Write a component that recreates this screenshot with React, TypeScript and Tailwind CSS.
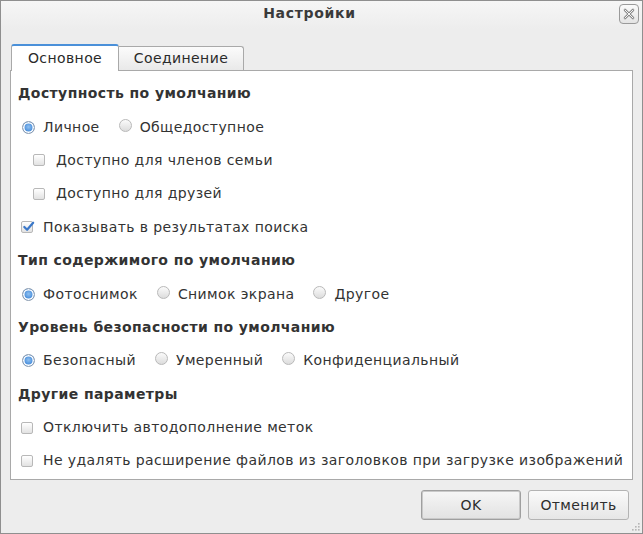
import React from "react";

const Radio = ({ checked }: { checked?: boolean }) => (
  <span
    className={
      "inline-block w-[13px] h-[13px] rounded-full border shrink-0 " +
      (checked
        ? "border-[#8a9bb0] bg-[radial-gradient(circle_at_50%_45%,#8fc0f0_0%,#4a8fdc_55%,#2f6fc0_100%)] shadow-[inset_0_0_0_1.5px_#ffffff]"
        : "border-[#b9b9b9] bg-[linear-gradient(#fbfbfb,#dcdcdc)]")
    }
  />
);

const Check = ({ checked }: { checked?: boolean }) => (
  <span className="relative inline-block w-[12px] h-[12px] rounded-[2px] border border-[#b8b8b8] bg-[linear-gradient(#ffffff,#e2e2e2)] shrink-0">
    {checked && (
      <svg
        viewBox="0 0 14 14"
        className="absolute left-[0px] top-[-2px] w-[13px] h-[13px]"
      >
        <path
          d="M2.5 7.5 L5.5 10.5 L12 3"
          fill="none"
          stroke="#3b78c9"
          strokeWidth="2.4"
          strokeLinecap="round"
          strokeLinejoin="round"
        />
      </svg>
    )}
  </span>
);

const Row = ({ children, className = "" }: { children: React.ReactNode; className?: string }) => (
  <div className={"h-[33.4px] flex items-center " + className}>{children}</div>
);

export default function App() {
  return (
    <div className="w-[643px] h-[534px] flex flex-col border border-[#8f8f8f] bg-[#ededed] text-[14px] tracking-[0.4px] text-[#333333] font-['DejaVu_Sans',sans-serif] overflow-hidden">
      {/* title bar */}
      <div className="relative h-[28px] flex items-center justify-center pb-[3px] pr-[24px] bg-[linear-gradient(#f6f6f6,#ededed)]">
        <span className="font-bold text-[14px] tracking-[0.7px] text-[#3a3a3a]">Настройки</span>
        <span className="absolute right-[3px] top-[3px] w-[20px] h-[20px] rounded-[4px] border border-[#9a9a9a] bg-[linear-gradient(#fafafa,#e4e4e4)] flex items-center justify-center">
          <svg viewBox="0 0 12 12" className="w-[12px] h-[12px]">
            <path
              d="M2 2 L10 10 M10 2 L2 10"
              stroke="#8a8a8a"
              strokeWidth="2.6"
              strokeLinecap="round"
            />
            <path
              d="M2 2 L10 10 M10 2 L2 10"
              stroke="#f4f4f4"
              strokeWidth="1"
              strokeLinecap="round"
            />
          </svg>
        </span>
      </div>

      {/* tabs */}
      <div className="mt-[15px] flex items-end pl-[10px] h-[26px]">
        <div className="relative z-10 h-[27px] w-[108px] -mb-px bg-white border border-[#a9a9a9] border-b-0 border-t-2 border-t-[#4a90d9] rounded-t-[3px] flex items-center justify-center text-[#2a2a2a]">
          Основное
        </div>
        <div className="h-[24px] w-[125px] bg-[linear-gradient(#fbfbfb,#e9e9e9)] border border-[#a9a9a9] border-l-0 border-b-0 rounded-tr-[3px] flex items-center justify-center text-[#2a2a2a]">
          Соединение
        </div>
      </div>

      {/* panel */}
      <div className="mx-[9px] h-[410px] bg-white border border-[#a9a9a9] pl-[7px] pt-[6px]">
        <Row>
          <span className="font-bold">Доступность по умолчанию</span>
        </Row>
        <Row className="pl-[4px]">
          <Radio checked />
          <span className="ml-[8px]">Личное</span>
          <span className="ml-[19px]">
            <Radio />
          </span>
          <span className="ml-[8px]">Общедоступное</span>
        </Row>
        <Row className="pl-[15px]">
          <Check />
          <span className="ml-[11px]">Доступно для членов семьи</span>
        </Row>
        <Row className="pl-[15px]">
          <Check />
          <span className="ml-[11px]">Доступно для друзей</span>
        </Row>
        <Row className="pl-[3px]">
          <Check checked />
          <span className="ml-[10px]">Показывать в результатах поиска</span>
        </Row>
        <Row>
          <span className="font-bold">Тип содержимого по умолчанию</span>
        </Row>
        <Row className="pl-[4px]">
          <Radio checked />
          <span className="ml-[8px]">Фотоснимок</span>
          <span className="ml-[19px]">
            <Radio />
          </span>
          <span className="ml-[8px]">Снимок экрана</span>
          <span className="ml-[19px]">
            <Radio />
          </span>
          <span className="ml-[8px]">Другое</span>
        </Row>
        <Row>
          <span className="font-bold">Уровень безопасности по умолчанию</span>
        </Row>
        <Row className="pl-[4px]">
          <Radio checked />
          <span className="ml-[8px]">Безопасный</span>
          <span className="ml-[19px]">
            <Radio />
          </span>
          <span className="ml-[8px]">Умеренный</span>
          <span className="ml-[19px]">
            <Radio />
          </span>
          <span className="ml-[8px]">Конфиденциальный</span>
        </Row>
        <Row>
          <span className="font-bold">Другие параметры</span>
        </Row>
        <Row className="pl-[3px]">
          <Check />
          <span className="ml-[10px]">Отключить автодополнение меток</span>
        </Row>
        <Row className="pl-[3px]">
          <Check />
          <span className="ml-[10px]">
            Не удалять расширение файлов из заголовков при загрузке изображений
          </span>
        </Row>
      </div>

      {/* buttons */}
      <div className="relative flex justify-end gap-[7px] pr-[13px] mt-[10px]">
        <button className="w-[100px] h-[30px] rounded-[3px] border border-[#9f9f9f] bg-[linear-gradient(#f6f6f6,#e2e2e2)] shadow-[inset_0_0_0_1px_#c9c9c9] text-[#2e2e2e]">
          OK
        </button>
        <button className="w-[101px] h-[30px] rounded-[3px] border border-[#b3b3b3] bg-[linear-gradient(#fafafa,#e6e6e6)] text-[#2e2e2e]">
          Отменить
        </button>
      </div>
      <div className="flex-1 relative">
        <svg viewBox="0 0 9 9" className="absolute right-[2px] bottom-[2px] w-[9px] h-[9px]">
          {[
            [7, 1],
            [4, 4],
            [7, 4],
            [1, 7],
            [4, 7],
            [7, 7],
          ].map(([x, y], i) => (
            <rect key={i} x={x} y={y} width="1.6" height="1.6" fill="#b5b5b5" />
          ))}
        </svg>
      </div>
    </div>
  );
}
